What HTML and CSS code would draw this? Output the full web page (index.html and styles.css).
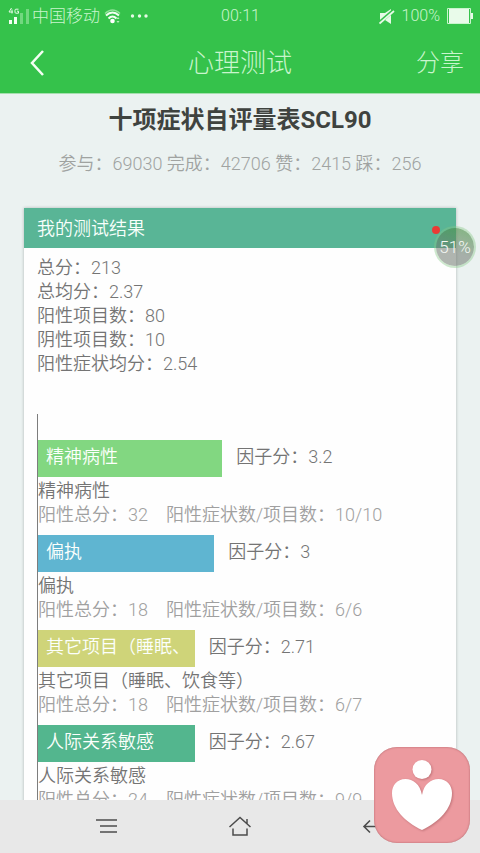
FILE: index.html
```html
<!DOCTYPE html>
<html lang="zh-CN">
<head>
<meta charset="utf-8">
<meta name="viewport" content="width=device-width, initial-scale=1">
<title>心理测试</title>
<link rel="stylesheet" href="styles.css">
</head>
<body>
<div class="app">
  <header class="top">
    <div class="status">
      <div class="status-left">
        <svg class="signal" width="22" height="18" viewBox="0 0 22 18" aria-hidden="true">
          <path d="M3.5 1L1 5h4M4 2.500v4M10.500 2.200H8a1 1 0 0 0-1 1v2a1 1 0 0 0 1 1h2.500V4.200H9" fill="none" stroke="#e6fae6" stroke-width="1"/>
          <path d="M1 13h3v4H1zM6 10h3v7H6z" fill="#f2fff2"/>
          <path d="M12 6h3v11h-3zM18 2h3v15h-3z" fill="#72d880"/>
        </svg>
        <span class="carrier">中国移动</span>
        <svg class="wifi" width="18" height="16" viewBox="0 0 18 16" aria-hidden="true">
          <path d="M1 5.500Q8.500-1.500 16 5.500" fill="none" stroke="#8fe298" stroke-width="1.500"/>
          <path d="M2 7.500Q8.500 1.500 15 7.500M4.500 10.500Q8.500 6.500 12.500 10.500" fill="none" stroke="#f2fff2" stroke-width="2"/>
          <circle cx="8.500" cy="13" r="2.300" fill="#fff"/>
          <path d="M14 9l1.500 2h-3zM14 15l-1.500-2h3z" fill="#b5efba"/>
        </svg>
        <svg width="18" height="16" viewBox="0 0 18 16" aria-hidden="true">
          <g fill="#e6fae6"><circle cx="2.500" cy="8" r="1.700"/><circle cx="9.500" cy="8" r="1.700"/><circle cx="16" cy="8" r="1.700"/></g>
        </svg>
      </div>
      <time class="clock">00:11</time>
      <div class="status-right">
        <svg width="16" height="17" viewBox="0 0 16 17" aria-hidden="true">
          <path d="M1 5h5l6-4v15l-6-4H1z" fill="#e6fae6"/>
          <path d="M0 15L15 2" stroke="#35c24b" stroke-width="3.500"/>
          <path d="M.5 15.500L15 3" stroke="#e6fae6" stroke-width="1.800"/>
        </svg>
        <span>100%</span>
        <svg width="26" height="16" viewBox="0 0 26 16" aria-hidden="true">
          <path d="M.5.500h23v15H.5z" fill="none" stroke="#c9f5cd"/>
          <path d="M2 1h20v14H2zM24 5h2v6h-2z" fill="#e9fbea"/>
        </svg>
      </div>
    </div>
    <div class="bar">
      <button class="back" type="button" aria-label="返回">
        <svg width="16" height="28" viewBox="0 0 16 28"><path d="M14 2L3 14l11 12" fill="none" stroke="#f4fff4" stroke-width="2.500"/></svg>
      </button>
      <h1 class="bar-title">心理测试</h1>
      <button class="share" type="button">分享</button>
    </div>
  </header>

  <main class="page">
    <h2 class="test-name">十项症状自评量表SCL90</h2>
    <p class="meta">参与：69030 完成：42706 赞：2415 踩：256</p>

    <section class="card">
      <div class="card-head">
        <h3>我的测试结果</h3>
        <span class="dot"></span>
        <span class="bubble">51%</span>
      </div>
      <div class="card-body">
        <p>总分：213</p>
        <p>总均分：2.37</p>
        <p>阳性项目数：80</p>
        <p>阴性项目数：10</p>
        <p>阳性症状均分：2.54</p>

        <div class="chart">
          <div class="factor">
            <div class="row"><div class="fill green" style="width:45.5%">精神病性</div><span class="score">因子分：3.2</span></div>
            <p>精神病性</p>
            <p class="detail">阳性总分：32　阳性症状数/项目数：10/10</p>
          </div>
          <div class="factor">
            <div class="row"><div class="fill blue" style="width:43.5%">偏执</div><span class="score">因子分：3</span></div>
            <p>偏执</p>
            <p class="detail">阳性总分：18　阳性症状数/项目数：6/6</p>
          </div>
          <div class="factor">
            <div class="row"><div class="fill olive" style="width:38.7%">其它项目（睡眠、</div><span class="score">因子分：2.71</span></div>
            <p>其它项目（睡眠、饮食等）</p>
            <p class="detail">阳性总分：18　阳性症状数/项目数：6/7</p>
          </div>
          <div class="factor">
            <div class="row"><div class="fill teal" style="width:38.7%">人际关系敏感</div><span class="score">因子分：2.67</span></div>
            <p>人际关系敏感</p>
            <p class="detail">阳性总分：24　阳性症状数/项目数：9/9</p>
          </div>
        </div>
      </div>
    </section>
  </main>

  <nav class="nav">
    <button type="button" aria-label="菜单">
      <svg width="24" height="20" viewBox="0 0 24 20"><path d="M1 3h21M5 9h17M5 15h17" fill="none" stroke="#4c4c4c" stroke-width="1.600"/></svg>
    </button>
    <button type="button" aria-label="主页">
      <svg width="24" height="22" viewBox="0 0 24 22"><path d="M1.500 11L12 1.500 22.500 11M19 7.500V3M5 12.500V19h14v-6.500" fill="none" stroke="#4c4c4c" stroke-width="1.500"/></svg>
    </button>
    <button type="button" aria-label="后退">
      <svg width="22" height="16" viewBox="0 0 22 16"><path d="M22 7.500H2M8 1.500L2 7.500l6 6" fill="none" stroke="#4c4c4c" stroke-width="1.600"/></svg>
    </button>
  </nav>

  <a class="badge" href="#" aria-label="心理">
    <svg viewBox="0 0 96 96">
      <g fill="#fff">
        <circle cx="48" cy="22.500" r="9.500"/>
        <path d="M48 48C46 37 39 32 31.500 32C23 32 18 38.500 18 46C18 62 31 75 48 83C65 75 78 62 78 46C78 38.500 73 32 64.500 32C57 32 50 37 48 48Z"/>
      </g>
    </svg>
  </a>
</div>
</body>
</html>
```
FILE: styles.css
```css
* {
  box-sizing: border-box;
}

body {
  margin: 0;
  font-family: Roboto, "Noto Sans CJK SC", sans-serif;
  font-size: 18px;
  font-weight: 350;
  line-height: 24px;
  color: #747474;
}

h1, h2, h3, p {
  margin: 0;
  font-weight: inherit;
}

button {
  padding: 0;
  border: 0;
  background: none;
  font: inherit;
  color: inherit;
}

svg {
  display: block;
}

.app {
  position: relative;
  display: flex;
  flex-direction: column;
  height: 100vh;
  background: #ebf2f1;
}

.top {
  flex: none;
  background: #35c24b;
  border-bottom: 1px solid #a5dfae;
  color: #c9f5cd;
  font-weight: 300;
}

.status {
  display: grid;
  grid-template-columns: 1fr auto 1fr;
  align-items: center;
  height: 32px;
  padding: 0 7px 0 8px;
  font-size: 17px;
}

.status-left,
.status-right {
  display: flex;
  align-items: center;
}

.status-left {
  gap: 4px;
}

.carrier {
  margin-left: -2px;
}

.wifi {
  margin-right: 4px;
}

.clock,
.status-right {
  font-size: 16px;
}

.status-right {
  justify-content: flex-end;
  gap: 7px;
}

.bar {
  display: grid;
  grid-template-columns: 1fr auto 1fr;
  align-items: center;
  height: 61px;
  padding: 0 16px;
}

.bar-title {
  font-size: 26px;
  line-height: 32px;
}

.back {
  justify-self: start;
  padding-left: 13px;
}

.share {
  justify-self: end;
  font-size: 24px;
  line-height: 32px;
}

.page {
  flex: 1;
  min-height: 0;
  overflow-y: auto;
  scrollbar-width: none;
  padding: 10px 24px 0;
}

.test-name {
  font-size: 24px;
  line-height: 32px;
  font-weight: 700;
  text-align: center;
  color: #3f433f;
}

.meta {
  margin: 16px 0 32px;
  text-align: center;
  color: #a0a3a1;
}

.card {
  background: #fefefe;
  box-shadow: 0 0 3px rgba(0, 0, 0, 0.25);
}

.card-head {
  position: relative;
  padding: 9px 13px 7px;
  background: #59b596;
  color: #f8fffc;
}

.card-head h3 {
  font-size: 18px;
}

.dot {
  position: absolute;
  top: 18px;
  right: 16px;
  width: 8px;
  height: 8px;
  border-radius: 50%;
  background: #ea3b35;
}

.bubble {
  position: absolute;
  top: 18px;
  right: -20px;
  width: 42px;
  height: 42px;
  border: 2px solid rgba(135, 200, 135, 0.4);
  border-radius: 50%;
  background: linear-gradient(200deg, rgba(70, 150, 65, 0.65), rgba(110, 120, 110, 0.55) 60%);
  background-clip: padding-box;
  font-weight: 300;
  line-height: 38px;
  font-size: 17px;
  text-align: center;
  color: #f4f8f4;
}

.card-body {
  padding: 8px 13px 20px;
}

.chart {
  margin-top: 38px;
  padding-top: 26px;
  border-left: 1px solid #7d7d7d;
}

.factor {
  margin-bottom: 8px;
}

.row {
  display: flex;
  gap: 14px;
  margin-bottom: 2px;
}

.fill {
  flex: none;
  height: 37px;
  padding: 5px 0 0 8px;
  white-space: nowrap;
  color: #fcfffc;
}

.score {
  padding-top: 5px;
}

.green { background: #82d781; }
.blue { background: #5fb5d1; }
.olive { background: #cfd479; }
.teal { background: #53b68e; }

.detail {
  color: #a0a0a0;
}

.nav {
  flex: none;
  display: grid;
  grid-template-columns: repeat(3, 1fr);
  align-items: center;
  justify-items: center;
  height: 53px;
  padding: 0 40px;
  background: #e8e8e8;
}

.badge {
  position: absolute;
  right: 10px;
  bottom: 10px;
  width: 96px;
  height: 96px;
  border-radius: 23px;
  background: #ec9a9f;
  box-shadow: inset 0 0 2px rgba(120, 50, 55, 0.6);
}

.badge g {
  filter: drop-shadow(1px 1px 1px rgba(130, 60, 65, 0.4));
}
```
